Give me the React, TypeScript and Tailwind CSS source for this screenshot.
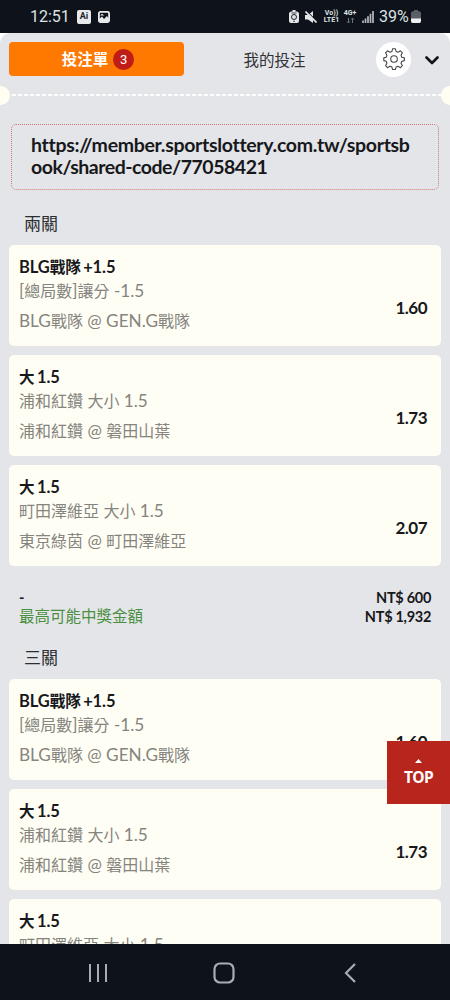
type Bet = {
  pick: string
  market: string
  match: string
  odds: string
}

const bets: Bet[] = [
  {
    pick: "BLG戰隊 +1.5",
    market: "[總局數]讓分 -1.5",
    match: "BLG戰隊 @ GEN.G戰隊",
    odds: "1.60",
  },
  {
    pick: "大 1.5",
    market: "浦和紅鑽 大小 1.5",
    match: "浦和紅鑽 @ 磐田山葉",
    odds: "1.73",
  },
  {
    pick: "大 1.5",
    market: "町田澤維亞 大小 1.5",
    match: "東京綠茵 @ 町田澤維亞",
    odds: "2.07",
  },
]

export default function App() {
  return (
    <div className="relative flex h-[1000px] w-[450px] flex-col overflow-hidden bg-white font-['Lato','Noto_Sans_CJK_TC',sans-serif] text-[#17181b] [font-variant-ligatures:none]">
      <StatusBar />

      <main className="flex min-h-0 flex-1 flex-col overflow-hidden rounded-t-[10px] bg-[#e4e5e8]">
        <Header />
        <Divider />
        <ShareLink />

        <SectionTitle className="mt-[21px]">兩關</SectionTitle>
        <BetList />
        <Summary />

        <SectionTitle className="mt-[19px]">三關</SectionTitle>
        <BetList />
      </main>

      <NavBar />
      <TopButton />
    </div>
  )
}

function StatusBar() {
  return (
    <div className="flex h-[33px] shrink-0 items-center bg-[#0e131b] pl-[30px] font-['Roboto',sans-serif] text-[#dfe1e4]">
      <span className="w-[39px] text-base leading-none whitespace-nowrap">
        12:51
      </span>
      <span className="ml-2 flex h-[14px] w-[14px] items-center justify-center rounded-[2px] bg-[#e8e9ea] text-[9px] leading-none font-bold text-[#20252c]">
        Ai
      </span>
      <svg className="ml-[7px] h-3 w-3" viewBox="0 0 12 12">
        <rect x="0.9" y="0.9" width="10.2" height="10.2" rx="1.5" fill="none" stroke="#e8e9ea" strokeWidth="1.8" />
        <path d="M1 10V8l3-2.5L6 8l3-3 2 3v3H1z" fill="#e8e9ea" />
        <path d="M2 4.6l2-1.8 2.2 1.8z" fill="#e8e9ea" />
      </svg>

      <svg className="ml-[179px] h-[13px] w-[10px]" viewBox="0 0 10 13">
        <path d="M2.5 1.5h1V0h3v1.5h1Q10 1.5 10 4v7q0 2-2 2H2q-2 0-2-2V4q0-2.5 2.5-2.5z" fill="#e2e4e6" />
        <circle cx="5" cy="7" r="2.5" fill="none" stroke="#20252c" strokeWidth="1" />
        <path d="M2.5 3h5M4 11.3h2" stroke="#20252c" strokeWidth="0.8" />
      </svg>
      <svg className="ml-[6px] h-3 w-3" viewBox="0 0 12 12">
        <path d="M0 4h3l5-4v12L3 8.5H0z" fill="#e2e4e6" />
        <path d="M0.5 -1l12 12" stroke="#0e131b" strokeWidth="1.2" />
        <path d="M0.5 0.5l11 11" stroke="#e2e4e6" strokeWidth="1.6" />
      </svg>
      <div className="ml-[6px] flex w-[17px] flex-col items-center text-[7px] leading-[7px] font-bold">
        <span>Vo))</span>
        <span>LTE1</span>
      </div>
      <div className="ml-[3px] flex w-[14px] flex-col items-center text-[7px] leading-[7px] font-bold">
        <span>4G+</span>
        <svg className="h-[7px] w-[9px]" viewBox="0 0 9 7">
          <path d="M2.5 1v5M1 4.5L2.5 6 4 4.5M6.5 6V1M5 2.5L6.5 1 8 2.5" fill="none" stroke="#70767e" strokeWidth="1" />
        </svg>
      </div>
      <svg className="ml-[5px] h-3 w-3" viewBox="0 0 12 12">
        <path d="M1 12V9.5M3.5 12V7.5M6 12V5.2M8.5 12V2.7M11 12V0" stroke="#b4b8bd" strokeWidth="1.7" />
      </svg>
      <span className="ml-[5px] w-[31px] text-base leading-none whitespace-nowrap">
        39%
      </span>
      <svg className="ml-[1px] h-[13px] w-[10px]" viewBox="0 0 10 13">
        <path d="M3 1.2V0h4v1.2h1q2 0 2 2V11q0 2-2 2H2q-2 0-2-2V3.2q0-2 2-2z" fill="#5b6067" />
        <path d="M0 8.5h10V11q0 2-2 2H2q-2 0-2-2z" fill="#f0f1f2" />
      </svg>
    </div>
  )
}

function Header() {
  return (
    <div className="flex h-[52px] shrink-0 items-center pl-[9px]">
      <button className="flex h-[34px] w-[175px] items-center justify-center gap-[5px] rounded-[4px] bg-[#ff7900] pl-[3px] text-white">
        <span className="pt-[2px] text-[15.5px] leading-none font-bold">
          投注單
        </span>
        <span className="flex h-[21px] w-[21px] items-center justify-center rounded-full bg-[#c01c18] font-['Roboto',sans-serif] text-[13px] leading-none">
          3
        </span>
      </button>
      <button className="w-[181px] pt-[3px] text-center text-[15.5px] leading-none text-[#303236]">
        我的投注
      </button>
      <button className="ml-[11px] flex h-[35px] w-[35px] items-center justify-center rounded-full bg-white">
        <GearIcon />
      </button>
      <svg className="mt-[2px] ml-[14px] h-[9px] w-[14px]" viewBox="0 0 14 9">
        <path d="M1.5 1.5L7 7l5.5-5.5" fill="none" stroke="#111317" strokeWidth="2.6" strokeLinecap="round" strokeLinejoin="round" />
      </svg>
    </div>
  )
}

function GearIcon() {
  return (
    <svg className="h-[22px] w-[22px]" viewBox="0 0 22 22" fill="none" stroke="#44464a" strokeWidth="1.1" strokeLinejoin="round">
      <path
        d="M9.6 1h2.8l.7 2.8 2 .8 2.5-1.4 2 2-1.4 2.5.8 2 2.6.7v2.8l-2.6.7-.8 2 1.4 2.5-2 2-2.5-1.4-2 .8-.7 2.6H9.6l-.7-2.6-2-.8-2.5 1.4-2-2 1.4-2.5-.8-2L.6 13.2v-2.8l2.4-.7.8-2-1.4-2.5 2-2 2.5 1.4 2-.8z"
        transform="translate(.2 -.3) scale(.98)"
      />
      <circle cx="11" cy="11" r="3.3" />
    </svg>
  )
}

function Divider() {
  return (
    <div className="flex h-5 shrink-0 items-center">
      <div className="h-[19px] w-[10px] rounded-r-full bg-[#fffef0]" />
      <svg className="h-[2px] flex-1" width="431" height="2">
        <path d="M2 1h429" stroke="#fff" strokeWidth="2" strokeDasharray="4 2" />
      </svg>
      <div className="h-[19px] w-[9px] rounded-l-full bg-[#fffef0]" />
    </div>
  )
}

function ShareLink() {
  return (
    <div className="mx-[11px] mt-[19px] flex h-[66px] shrink-0 flex-col justify-center rounded-[5px] border border-dotted border-[#cf7775] pb-[2px] pl-[19px] text-[19.5px] leading-[22px] font-bold whitespace-nowrap">
      <span className="tracking-[-0.31px]">
        https://member.sportslottery.com.tw/sportsb
      </span>
      <span className="tracking-[-0.48px]">ook/shared-code/77058421</span>
    </div>
  )
}

function SectionTitle({
  children,
  className,
}: {
  children: string
  className: string
}) {
  return (
    <h2 className={`ml-6 h-[25px] shrink-0 text-[17px] leading-[25px] text-[#2b2d31] ${className}`}>
      {children}
    </h2>
  )
}

// Latin runs are set slightly larger than the Chinese text around them
function MixedText({ text, latin }: { text: string; latin: string }) {
  return text.split(/([\x20-\x7e]+)/).map((part, i) =>
    i % 2 === 1 ? (
      <span key={i} className={latin}>
        {part}
      </span>
    ) : (
      part
    ),
  )
}

function BetList() {
  return (
    <div className="mt-[9px] flex shrink-0 flex-col gap-[9px] px-[9px]">
      {bets.map((bet) => (
        <BetCard key={bet.match} bet={bet} />
      ))}
    </div>
  )
}

function BetCard({ bet }: { bet: Bet }) {
  return (
    <div className="flex h-[101px] items-center justify-between rounded-[5px] bg-[#fffef4] pr-[14px] pl-[10px]">
      <div className="flex h-full flex-col pt-[10px] whitespace-nowrap">
        <p className="h-6 text-[15.5px] leading-[25px] font-bold">
          <MixedText
            text={bet.pick}
            latin="text-[16.5px] tracking-[-0.1px] [word-spacing:-1.5px]"
          />
        </p>
        <p className="h-6 text-base leading-6 text-[#85847f]">
          <MixedText text={bet.market} latin="text-[17.2px]" />
        </p>
        <p className="mt-[6px] h-6 text-base leading-6 text-[#85847f]">
          <MixedText text={bet.match} latin="text-[17.2px]" />
        </p>
      </div>
      <span className="mt-[25px] text-[17px] leading-6 font-bold tracking-[-0.5px]">
        {bet.odds}
      </span>
    </div>
  )
}

function Summary() {
  return (
    <div className="mt-[22px] flex shrink-0 flex-col pr-[19px] pl-[19px] text-[14.5px] leading-[19px] font-bold tracking-[-0.3px]">
      <div className="flex h-[19px] justify-between">
        <span>-</span>
        <span>NT$ 600</span>
      </div>
      <div className="flex h-[19px] justify-between">
        <span className="text-[15.5px] font-normal tracking-normal text-[#4b8f43]">
          最高可能中獎金額
        </span>
        <span>NT$ 1,932</span>
      </div>
    </div>
  )
}

function NavBar() {
  return (
    <nav className="flex h-14 shrink-0 items-center bg-[#0e131b] pt-[2px] pl-[87px]">
      <svg className="h-5 w-5" viewBox="0 0 20 20">
        <path d="M3 1v18M11 1v18M19 1v18" stroke="#a9adb3" strokeWidth="2" />
      </svg>
      <svg className="ml-[106px] h-[22px] w-[22px]" viewBox="0 0 22 22">
        <rect x="1.5" y="1.5" width="19" height="19" rx="5.5" fill="none" stroke="#a9adb3" strokeWidth="2.2" />
      </svg>
      <svg className="ml-[109px] h-5 w-3" viewBox="0 0 12 20">
        <path d="M11 1L2 10l9 9" fill="none" stroke="#a9adb3" strokeWidth="2.2" />
      </svg>
    </nav>
  )
}

function TopButton() {
  return (
    <button className="absolute top-[741px] right-0 flex h-[63px] w-[63px] flex-col items-center bg-[#b7251c] pt-[18px] text-white">
      <svg className="h-1 w-[7px]" viewBox="0 0 7 4">
        <path d="M0 4l3.5-4L7 4z" fill="#fff" />
      </svg>
      <span className="mt-[6px] font-['Open_Sans',sans-serif] text-[15.5px] leading-4 font-bold tracking-[-0.6px]">
        TOP
      </span>
    </button>
  )
}
